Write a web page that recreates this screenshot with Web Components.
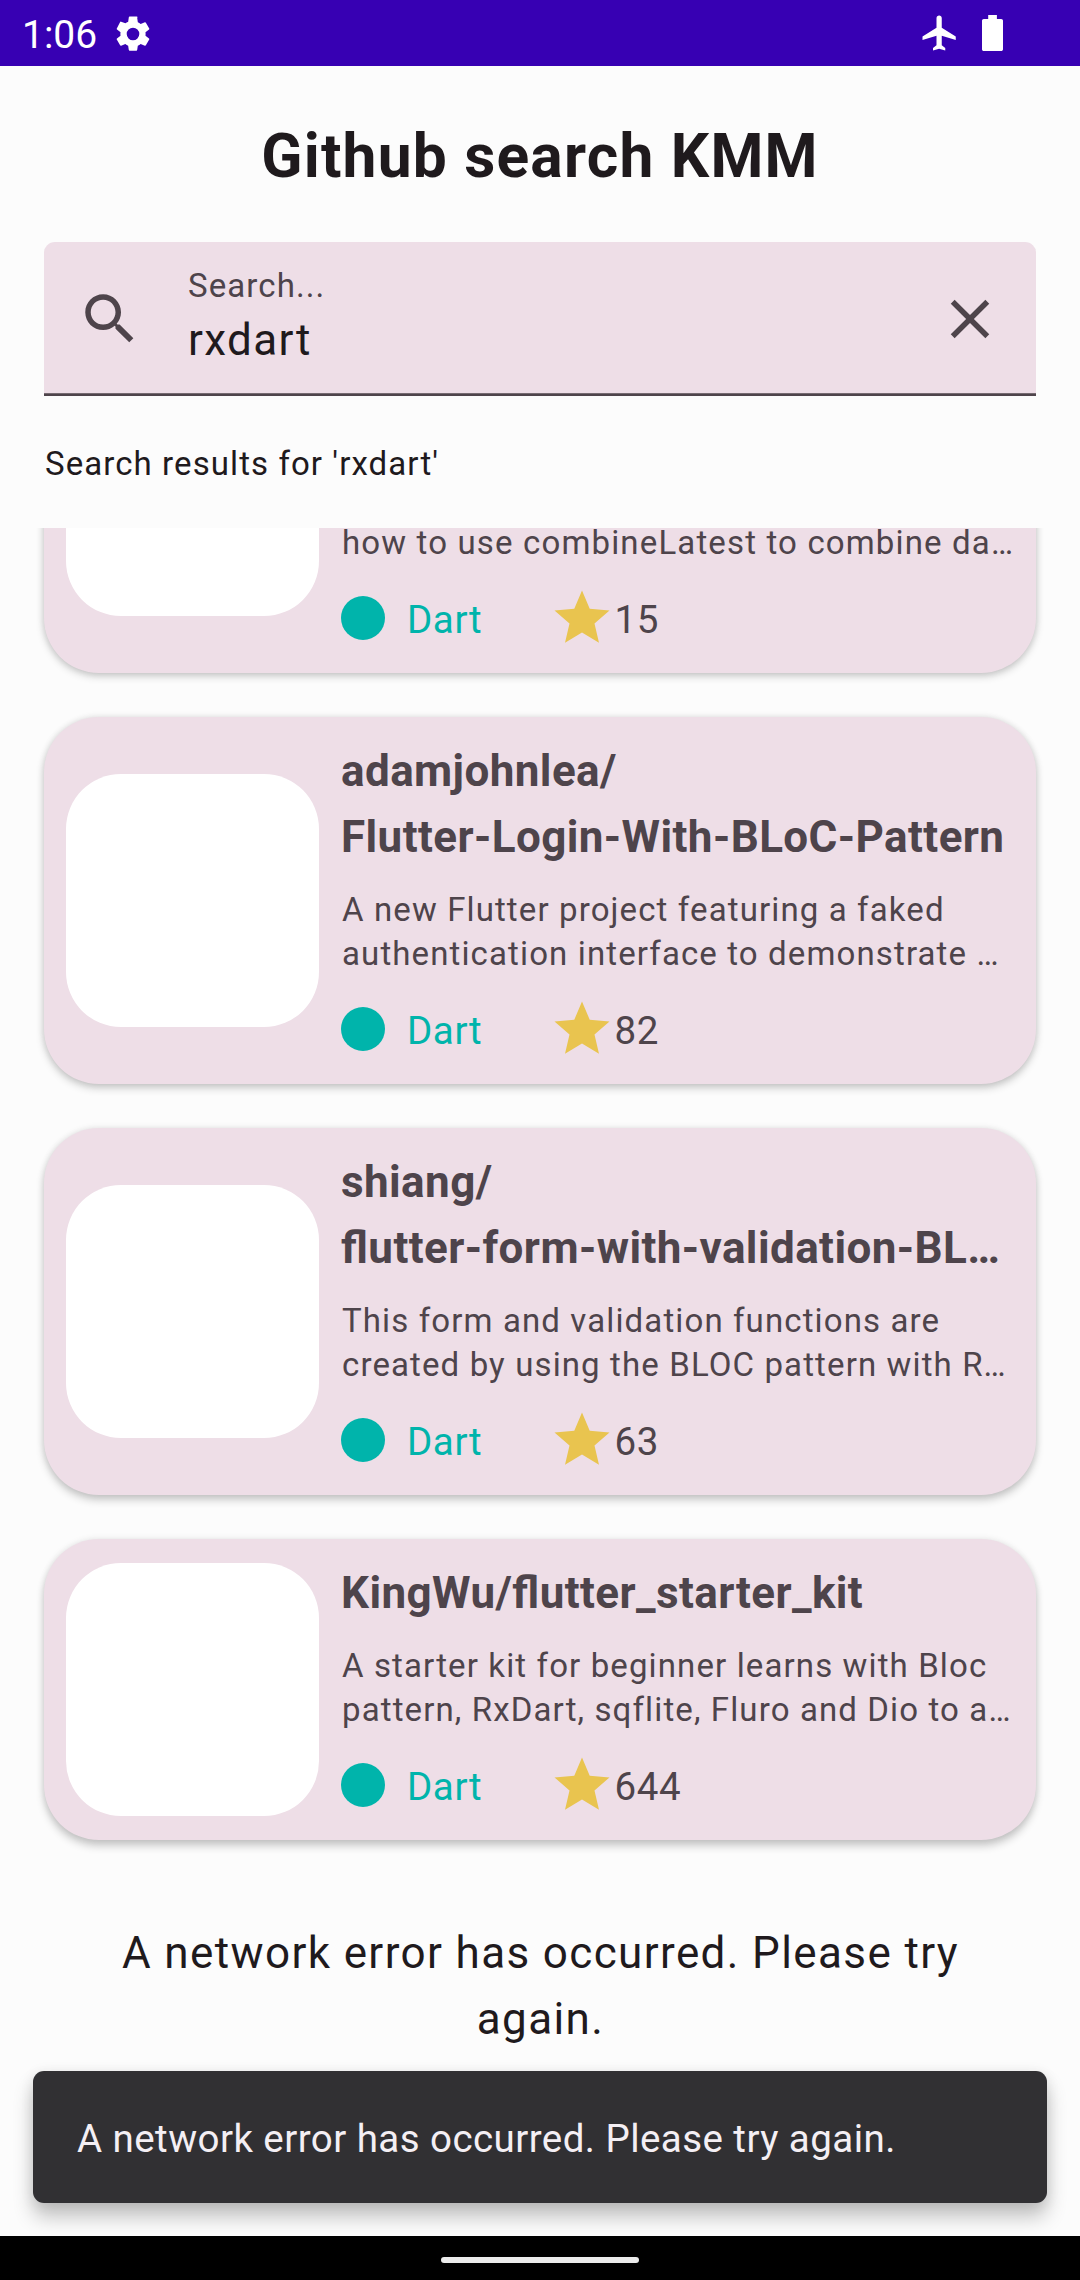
<!DOCTYPE html>
<html lang="en">
<head>
<meta charset="utf-8">
<title>Github search KMM</title>
<style>
  html, body { margin: 0; padding: 0; }
  body { width: 1080px; height: 2280px; overflow: hidden; background: #fcfcfc; font-family: Roboto, "Liberation Sans", sans-serif; color: #1f1a1d; }
</style>
</head>
<body>
<search-app></search-app>
<script>
const define = (name, html) => customElements.define(name, class extends HTMLElement {
  constructor() {
    super();
    const t = document.createElement('template');
    t.innerHTML = html;
    this.attachShadow({ mode: 'open' }).append(t.content.cloneNode(true));
  }
});

define('status-bar', `
<style>
  :host { display: flex; align-items: flex-start; height: 66px; background: #3700b3; color: #fff; box-sizing: border-box; padding: 0 77px 0 22px; }
  .time { font-size: 39px; line-height: 46px; padding-top: 12px; width: 90px; }
  svg { display: block; fill: currentColor; }
  .gear { margin-top: 12.5px; }
  .gap { flex: 1; }
  .plane { margin-top: 12px; margin-right: 21px; }
  .battery { margin-top: 15px; }
</style>
<span class="time">1:06</span>
<svg class="gear" width="42" height="42" viewBox="0 0 24 24"><path d="M19.14 12.94c.04-.3.06-.61.06-.94s-.02-.64-.07-.94l2.03-1.58a.49.49 0 0 0 .12-.61l-1.92-3.32a.49.49 0 0 0-.59-.22l-2.39.96c-.5-.38-1.03-.7-1.62-.94l-.36-2.54A.48.48 0 0 0 13.92 2h-3.84c-.24 0-.43.17-.47.41l-.36 2.54c-.59.24-1.13.57-1.62.94l-2.39-.96a.48.48 0 0 0-.59.22L2.74 8.87c-.12.21-.08.47.12.61l2.03 1.58c-.05.3-.09.63-.09.94s.02.64.07.94l-2.03 1.58a.49.49 0 0 0-.12.61l1.92 3.32c.12.22.37.29.59.22l2.39-.96c.5.38 1.03.7 1.62.94l.36 2.54c.05.24.24.41.48.41h3.84c.24 0 .44-.17.47-.41l.36-2.54c.59-.24 1.13-.56 1.62-.94l2.39.96c.22.08.47 0 .59-.22l1.92-3.32a.48.48 0 0 0-.12-.61zM12 15.6A3.6 3.6 0 1 1 12 8.4a3.6 3.6 0 0 1 0 7.2z"/></svg>
<span class="gap"></span>
<svg class="plane" width="42" height="42" viewBox="0 0 24 24"><path d="M21 16v-2l-8-5V3.5c0-.83-.67-1.5-1.5-1.5S10 2.67 10 3.5V9l-8 5v2l8-2.5V19l-2 1.5V22l3.500-1 3.500 1v-1.500L13 19v-5.500l8 2.500z"/></svg>
<svg class="battery" width="21" height="36" viewBox="0 0 21 36"><path d="M6.2 0h8.7v4h4.3c1 0 1.8.8 1.8 1.8v28.4c0 1-.8 1.8-1.8 1.8H1.800C.8 36 0 35.200 0 34.200V5.800C0 4.800.8 4 1.800 4h4.400z"/></svg>
`);

define('search-field', `
<style>
  :host { display: flex; align-items: center; box-sizing: border-box; height: 154px; padding: 0 33px; background: #eedee7; border-radius: 11px 11px 0 0; box-shadow: inset 0 -2.75px #4e444b; color: #4e444b; }
  svg { display: block; fill: currentColor; width: 66px; height: 66px; }
  .text { flex: 1; margin-left: 45px; display: flex; flex-direction: column; }
  .label { font-size: 33px; line-height: 44px; letter-spacing: 1.1px; }
  .value { font-size: 44px; line-height: 64px; padding-bottom: 2px; letter-spacing: 1.375px; color: #1f1a1d; }
</style>
<svg viewBox="0 0 24 24"><path d="M15.500 14h-.79l-.28-.27C15.410 12.590 16 11.110 16 9.500 16 5.910 13.090 3 9.500 3S3 5.910 3 9.500 5.910 16 9.500 16c1.610 0 3.090-.59 4.230-1.570l.27.28v.79l5 4.990L20.490 19l-4.990-5zm-6 0C7.010 14 5 11.990 5 9.500S7.010 5 9.500 5 14 7.010 14 9.500 11.990 14 9.500 14z"/></svg>
<div class="text"><span class="label"><slot name="label"></slot></span><span class="value"><slot></slot></span></div>
<svg viewBox="0 0 24 24"><path d="M19 6.410L17.590 5 12 10.590 6.410 5 5 6.410 10.590 12 5 17.590 6.410 19 12 13.410 17.590 19 19 17.590 13.410 12z"/></svg>
`);

define('repo-card', `
<style>
  :host { display: flex; align-items: center; flex: none; box-sizing: border-box; padding: 22px; background: #eedee7; color: #4e444b; border-radius: 55px; box-shadow: 0 var(--drop, 4px) 9px rgba(0,0,0,.2), 0 0 7px rgba(0,0,0,.09); }
  .avatar { flex: none; width: 253px; height: 253px; border-radius: 55px; background: #fff; margin: 0 22px 0 0; }
  .body { flex: 1; min-width: 0; margin-top: -1px; }
  .name { font-size: 44px; line-height: 66px; font-weight: 700; letter-spacing: .41px; font-feature-settings: "liga" 1; white-space: nowrap; }
  .desc { margin: 18px 0 0 1px; font-size: 33px; line-height: 44px; letter-spacing: 1.12px; white-space: nowrap; }
  :host([scrolled]) .name { height: 132px; }
  :host([scrolled]) .desc { padding-top: 44px; letter-spacing: 1.15px; }
  .meta { display: flex; align-items: center; height: 66px; margin-top: 20px; font-size: 38.5px; line-height: 55px; letter-spacing: .6px; }
  .dot { width: 44px; height: 44px; border-radius: 50%; background: #00b4ab; }
  .lang { margin-left: 22px; width: 141.500px; padding-top: 2px; color: #00b4ab; }
  .stars { padding-top: 2px; }
  svg { display: block; width: 66px; height: 66px; fill: #e9c44f; }
</style>
<div class="avatar"></div>
<div class="body">
  <div class="name"><slot name="name"></slot></div>
  <div class="desc"><slot name="desc"></slot></div>
  <div class="meta"><span class="dot"></span><span class="lang">Dart</span>
    <svg viewBox="0 0 24 24"><path d="M12 17.270L18.180 21l-1.640-7.030L22 9.240l-7.190-.61L12 2 9.190 8.630 2 9.240l5.460 4.730L5.820 21z"/></svg>
    <span class="stars"><slot name="stars"></slot></span></div>
</div>
`);

define('result-list', `
<style>
  :host { display: flex; flex-direction: column; justify-content: flex-end; gap: 44px; height: 1708px; overflow: hidden; padding: 0 44px; box-sizing: border-box; }
  .error { flex: none; box-sizing: border-box; height: 352px; padding: 36px 0 0 1px; text-align: center; font-size: 44px; line-height: 66px; letter-spacing: 1.375px; }
</style>
<slot></slot>
<div class="error"><slot name="error"></slot></div>
`);

define('snack-bar', `
<style>
  :host { display: flex; align-items: center; box-sizing: border-box; height: 132px; padding: 2px 44px 0; border-radius: 11px; background: #313033; color: #f4eff4; font-size: 38.5px; line-height: 55px; letter-spacing: .44px; box-shadow: 0 14px 20px rgba(0,0,0,.23), 0 2px 14px rgba(0,0,0,.09); }
</style>
<slot></slot>
`);

define('nav-bar', `
<style>
  :host { display: flex; align-items: center; justify-content: center; height: 44px; background: #000; box-sizing: border-box; padding-top: 4px; }
  span { width: 198px; height: 6px; border-radius: 3px; background: #ebebeb; }
</style>
<span></span>
`);

define('search-app', `
<style>
  :host { display: flex; flex-direction: column; position: relative; width: 1080px; height: 2280px; overflow: hidden; background: #fcfcfc; }
  h1 { margin: 52px 0 0; font-size: 60.500px; line-height: 77px; font-weight: 700; text-align: center; letter-spacing: 1.2px; height: 77px; }
  search-field { margin: 47px 44px 0; }
  .summary { margin: 46px 45px 42px; font-size: 33px; line-height: 44px; letter-spacing: 1.08px; }
  nav-bar { position: relative; }
  snack-bar { position: absolute; left: 33px; right: 33px; bottom: 77px; }
</style>
<status-bar></status-bar>
<h1>Github search KMM</h1>
<search-field><span slot="label">Search...</span>rxdart</search-field>
<div class="summary">Search results for 'rxdart'</div>
<result-list>
  <repo-card scrolled style="--drop:3px">
    <span slot="desc">how to use combineLatest to combine da…</span>
    <span slot="stars">15</span>
  </repo-card>
  <repo-card style="--drop:4px">
    <span slot="name">adamjohnlea/<br>Flutter-Login-With-BLoC-Pattern</span>
    <span slot="desc">A new Flutter project featuring a faked<br>authentication interface to demonstrate …</span>
    <span slot="stars">82</span>
  </repo-card>
  <repo-card style="--drop:5px">
    <span slot="name">shiang/<br>flutter-form-with-validation-BL…</span>
    <span slot="desc">This form and validation functions are<br>created by using the BLOC pattern with R…</span>
    <span slot="stars">63</span>
  </repo-card>
  <repo-card style="--drop:6px">
    <span slot="name">KingWu/flutter_starter_kit</span>
    <span slot="desc">A starter kit for beginner learns with Bloc<br>pattern, RxDart, sqflite, Fluro and Dio to a…</span>
    <span slot="stars">644</span>
  </repo-card>
  <span slot="error">A network error has occurred. Please try<br>again.</span>
</result-list>
<snack-bar>A network error has occurred. Please try again.</snack-bar>
<nav-bar></nav-bar>
`);
</script>
</body>
</html>
